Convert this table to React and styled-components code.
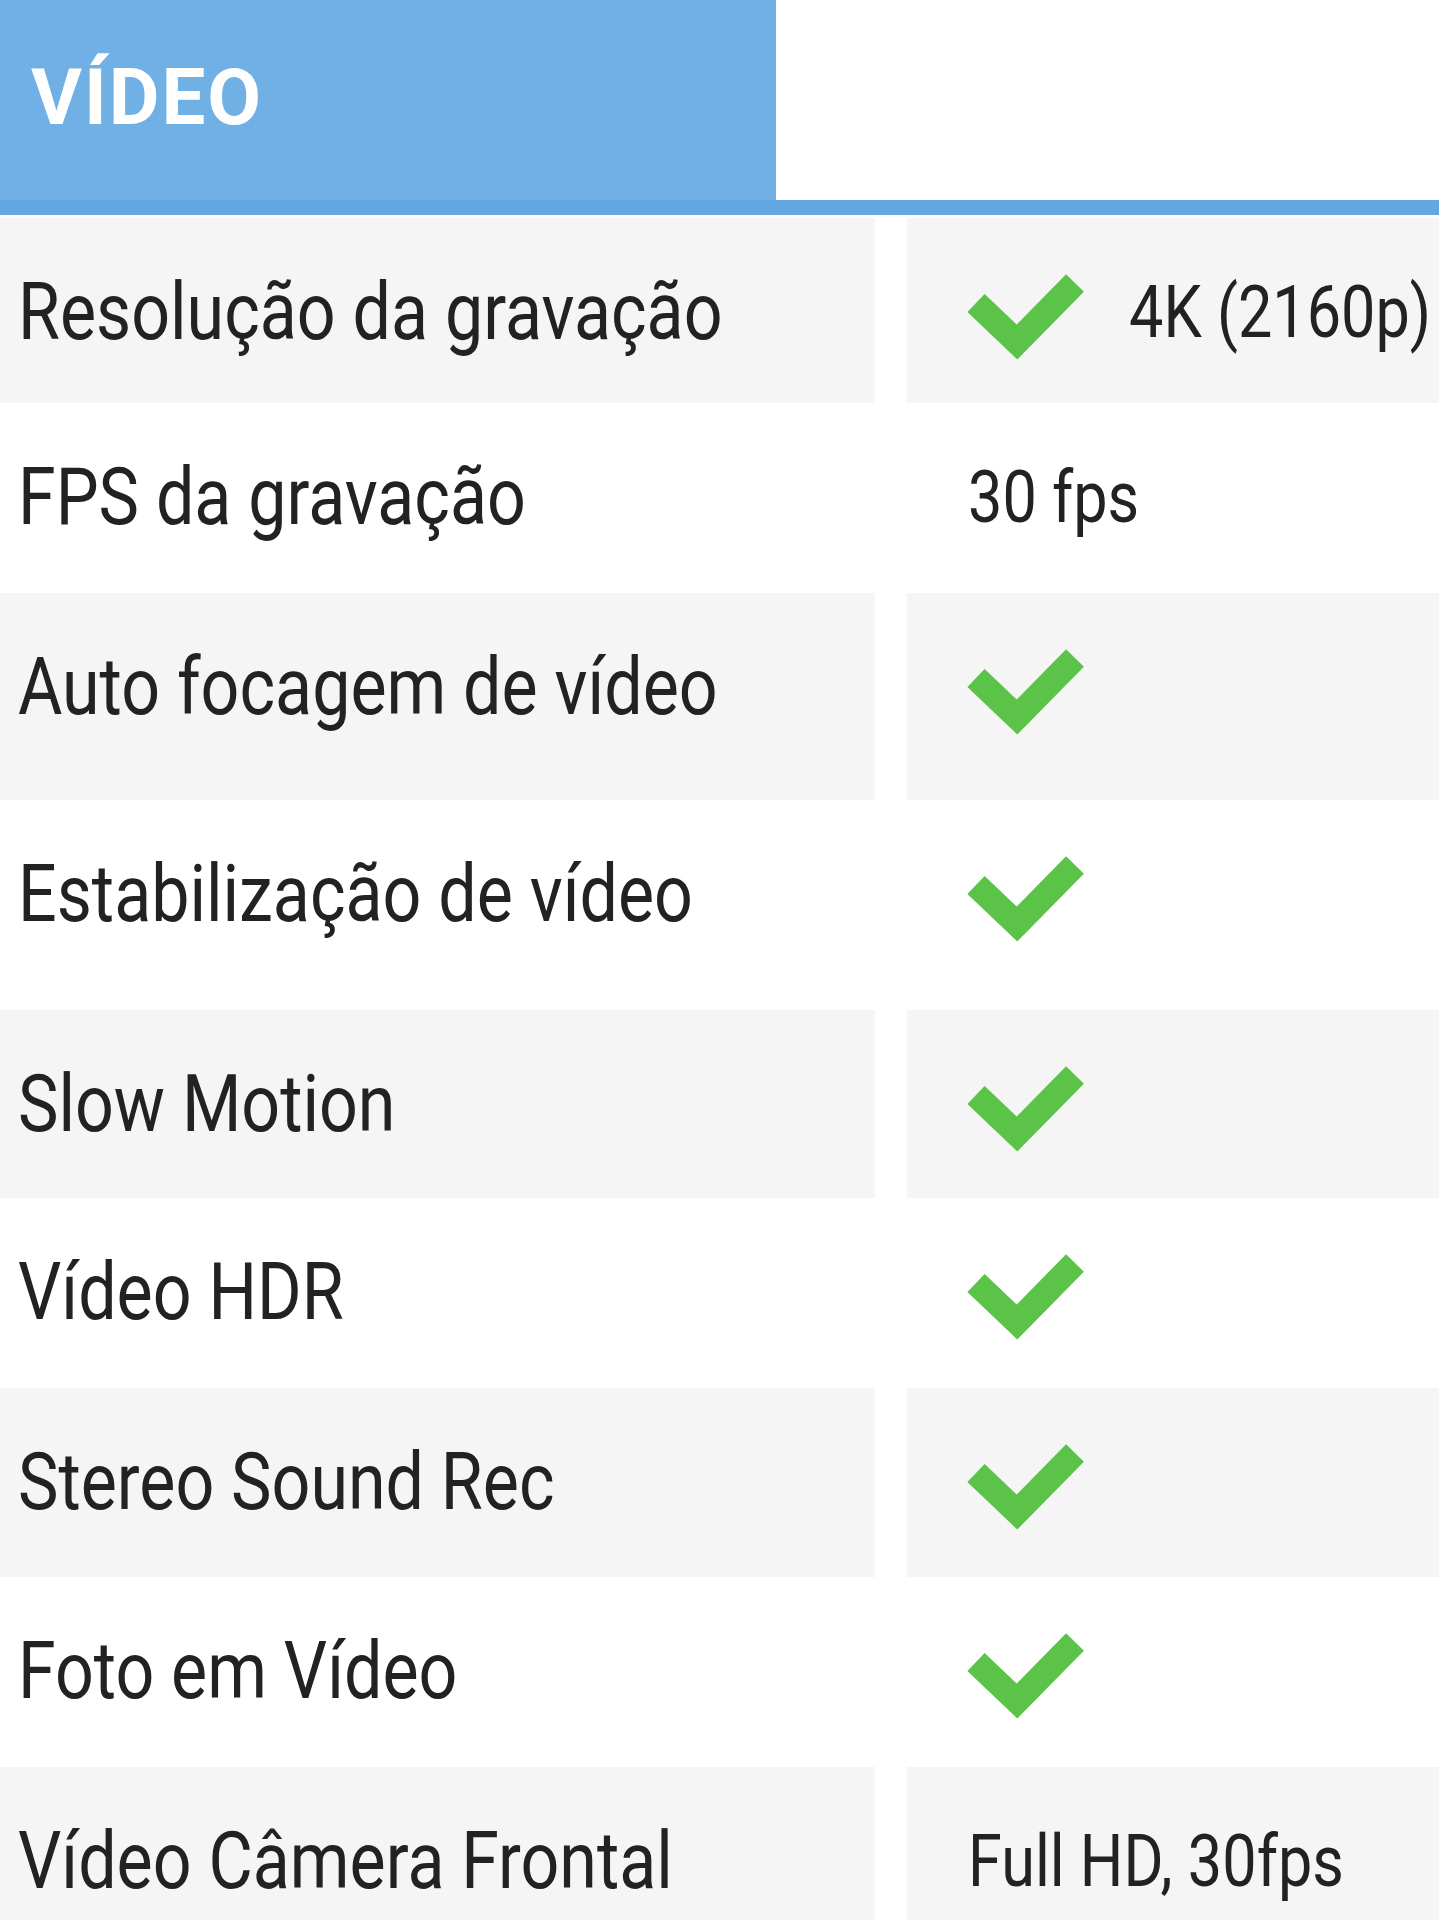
import React from 'react'
import styled, { createGlobalStyle } from 'styled-components';

const GlobalStyle = createGlobalStyle`
  html, body {
    margin: 0;
    padding: 0;
    background: #fff;
  }
  body {
    font-family: Roboto, "Liberation Sans", sans-serif;
    color: #222;
    overflow-x: hidden;
  }
`;

const Page = styled.div`
  width: 1439px;
  min-height: 1920px;
  overflow: hidden;
`;

const SectionHeader = styled.div`
  display: flex;
  border-bottom: 15px solid #63a7e1;
  margin-bottom: 3px;
`;

const SectionTab = styled.div`
  display: flex;
  align-items: center;
  width: 776px;
  height: 200px;
  padding-left: 31px;
  box-sizing: border-box;
  background: #71b0e4;
  color: #fff;
`;

const SectionTitle = styled.span`
  display: inline-block;
  font-size: 78px;
  font-weight: 700;
  letter-spacing: 2px;
  margin-top: -6px;
`;

const Row = styled.div`
  display: grid;
  grid-template-columns: 875px 1fr;
  column-gap: 32px;
  height: ${p => p.$h}px;
`;

const Cell = styled.div`
  display: flex;
  align-items: flex-start;
  background: ${p => (p.$striped ? '#f5f5f5' : '#fff')};
  padding-left: ${p => (p.$value ? 61 : 18)}px;
  overflow: hidden;
  white-space: nowrap;
`;

const Label = styled.span`
  display: inline-block;
  margin-top: 48px;
  font-size: 79px;
  transform: scaleX(0.862);
  transform-origin: left center;
`;

const Value = styled.span`
  display: inline-block;
  margin-top: 52px;
  margin-left: ${p => (p.$afterCheck ? 47 : 0)}px;
  font-size: 72px;
  transform: scaleX(0.85);
  transform-origin: left center;
`;

const CheckIcon = styled.svg`
  flex: none;
  overflow: visible;
  margin-top: 57px;
`;

const Check = () => (
  <CheckIcon width="114" height="84" viewBox="0 0 114 84">
    <polyline
      points="8,28 49,67 107,8"
      fill="none"
      stroke="#5cc349"
      strokeWidth="25"
      strokeLinejoin="miter"
      strokeLinecap="butt"
    />
  </CheckIcon>
);

const rows = [
  { label: 'Resolução da gravação', check: true, value: '4K (2160p)', h: 185 },
  { label: 'FPS da gravação', value: '30 fps', h: 190 },
  { label: 'Auto focagem de vídeo', check: true, h: 207 },
  { label: 'Estabilização de vídeo', check: true, h: 210 },
  { label: 'Slow Motion', check: true, h: 188 },
  { label: 'Vídeo HDR', check: true, h: 190 },
  { label: 'Stereo Sound Rec', check: true, h: 189 },
  { label: 'Foto em Vídeo', check: true, h: 190 },
  { label: 'Vídeo Câmera Frontal', value: 'Full HD, 30fps', h: 190 },
];

const App = () => {
  return (
    <Page>
      <GlobalStyle />
      <SectionHeader>
        <SectionTab>
          <SectionTitle>VÍDEO</SectionTitle>
        </SectionTab>
      </SectionHeader>
      {rows.map((r, i) => (
        <Row key={r.label} $h={r.h}>
          <Cell $striped={i % 2 === 0}>
            <Label>{r.label}</Label>
          </Cell>
          <Cell $striped={i % 2 === 0} $value>
            {r.check && <Check />}
            {r.value && <Value $afterCheck={r.check}>{r.value}</Value>}
          </Cell>
        </Row>
      ))}
    </Page>
  )
}

export default App
